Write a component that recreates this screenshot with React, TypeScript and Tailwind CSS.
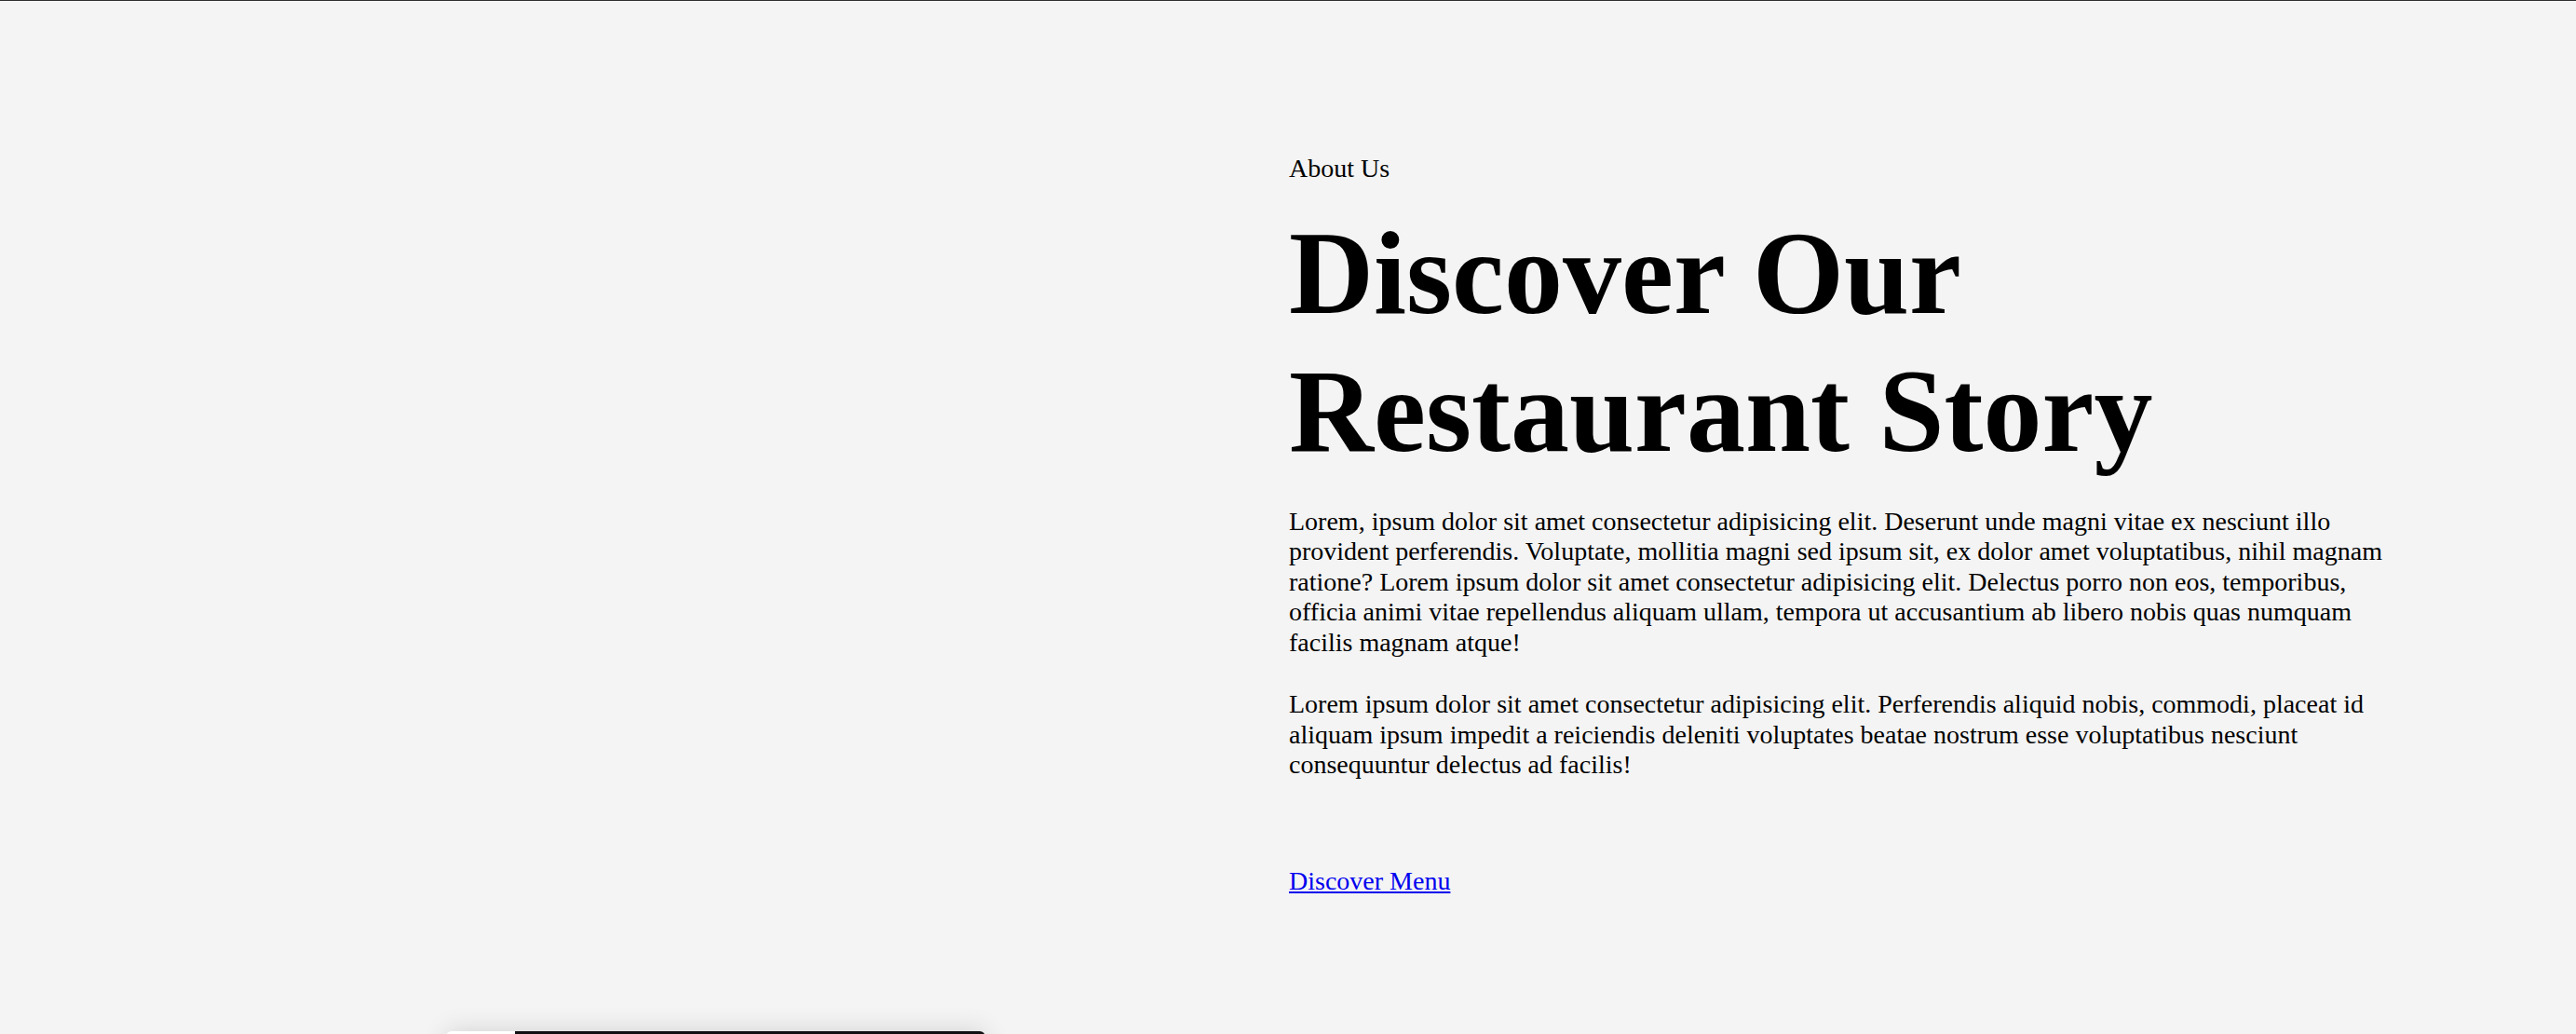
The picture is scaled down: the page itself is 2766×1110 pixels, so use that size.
import React from "react";

export default function App() {
  return (
    <div className="min-h-screen bg-[#f4f4f4] border-t border-[#2e2e2e] font-['Liberation_Serif',serif] text-black">
      <div className="grid grid-cols-2">
        <div className="pt-[1106px] pl-[479px]">
          <div className="flex w-[579px] h-[500px] rounded-[6px] overflow-hidden shadow-[0_0_28px_rgba(0,0,0,0.14)]">
            <div className="w-[74px] bg-white" />
            <div className="flex-1 bg-[#111114]" />
          </div>
        </div>
        <div className="pt-[164px] pl-[1px]">
          <div className="w-[1195px]">
            <p className="text-[28px] leading-[32.5px]">About Us</p>
            <h1 className="mt-[22px] text-[126px] leading-[148px] font-bold">
              Discover Our Restaurant Story
            </h1>
            <p className="mt-[28px] text-[28px] leading-[32.5px]">
              Lorem, ipsum dolor sit amet consectetur adipisicing elit. Deserunt unde magni vitae ex nesciunt illo provident perferendis. Voluptate, mollitia magni sed ipsum sit, ex dolor amet voluptatibus, nihil magnam ratione? Lorem ipsum dolor sit amet consectetur adipisicing elit. Delectus porro non eos, temporibus, officia animi vitae repellendus aliquam ullam, tempora ut accusantium ab libero nobis quas numquam facilis magnam atque!
            </p>
            <p className="mt-[34px] text-[28px] leading-[32.5px]">
              Lorem ipsum dolor sit amet consectetur adipisicing elit. Perferendis aliquid nobis, commodi, placeat id aliquam ipsum impedit a reiciendis deleniti voluptates beatae nostrum esse voluptatibus nesciunt consequuntur delectus ad facilis!
            </p>
            <div className="mt-[92px] text-[28px] leading-[32.5px]">
              <a href="#" className="text-[#0000ee] underline">
                Discover Menu
              </a>
            </div>
          </div>
        </div>
      </div>
    </div>
  );
}
